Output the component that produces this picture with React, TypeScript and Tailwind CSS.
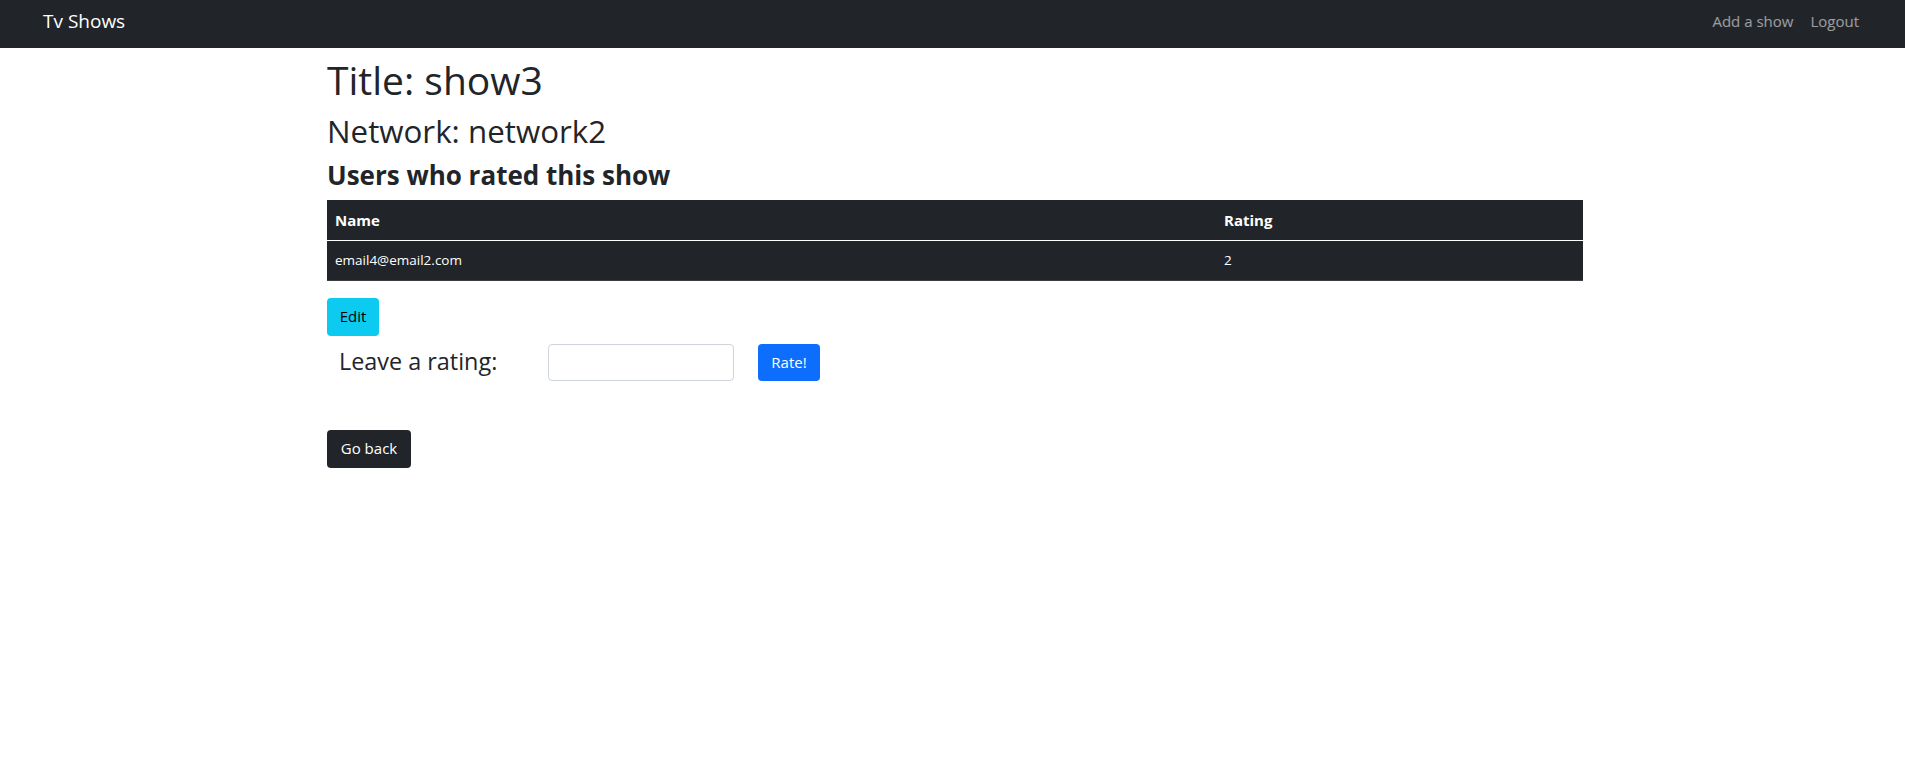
export default function App() {
  const ratings = [{ name: "email4@email2.com", rating: 2 }];

  return (
    <div className="min-h-screen bg-white text-[#212529]" style={{ fontFamily: '"Open Sans", "Noto Sans", sans-serif' }}>
      <nav className="h-12 bg-[#212529] flex items-center justify-between pl-[43px] pr-[46px] pb-[5px]">
        <a className="text-white text-[19px] leading-none">Tv Shows</a>
        <div className="flex items-center gap-[17px] text-[15px] text-white/55">
          <a>Add a show</a>
          <a>Logout</a>
        </div>
      </nav>

      <main className="w-[1256px] ml-[327px] pt-2">
        <h1 className="text-[39px] leading-[48px] font-medium mb-2">Title: show3</h1>
        <h2 className="text-[31.3px] leading-[38px] font-medium mb-2">Network: network2</h2>
        <h3 className="text-[26px] leading-[34px] font-bold mb-2">Users who rated this show</h3>

        <table className="w-full bg-[#212529] text-white mb-4">
          <thead>
            <tr className="h-10 border-b border-white text-[15px]">
              <th className="text-left font-bold pl-2 w-[889px]">Name</th>
              <th className="text-left font-bold pl-2">Rating</th>
            </tr>
          </thead>
          <tbody>
            {ratings.map((r) => (
              <tr key={r.name} className="h-10 border-b border-[#3a3e42] text-[13.5px]">
                <td className="pl-2">{r.name}</td>
                <td className="pl-2">{r.rating}</td>
              </tr>
            ))}
          </tbody>
        </table>

        <button className="mt-px h-[38px] w-[52px] rounded bg-[#0dcaf0] text-black text-[15px]">Edit</button>

        <form className="flex items-center mt-2 h-[37px]">
          <label className="text-[23.4px] font-medium ml-[12px] w-[209px]">Leave a rating:</label>
          <input className="w-[186px] h-[37px] border border-[#ced4da] rounded" />
          <button type="button" className="ml-[24px] w-[62px] h-[37px] rounded bg-[#0d6efd] text-white text-[15px]">
            Rate!
          </button>
        </form>

        <button className="mt-[49px] w-[84px] h-[38px] rounded bg-[#212529] text-white text-[15px]">Go back</button>
      </main>
    </div>
  );
}
